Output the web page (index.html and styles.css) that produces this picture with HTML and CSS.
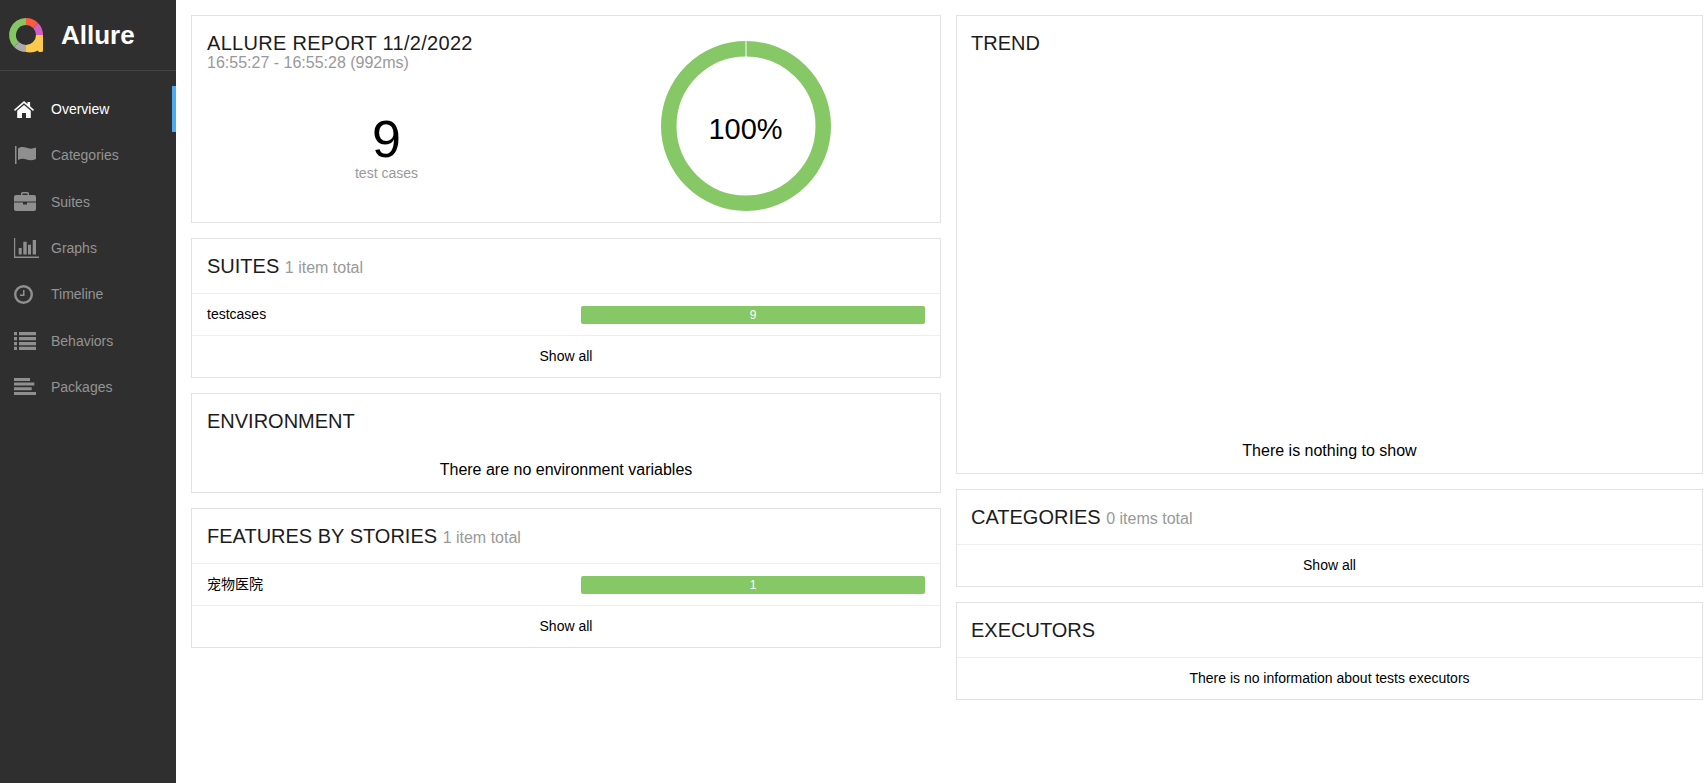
FILE: index.html
```html
<!DOCTYPE html>
<html lang="en">
<head>
<meta charset="utf-8">
<title>Allure Report</title>
<link rel="stylesheet" href="styles.css">
</head>
<body>
<aside class="side">
  <div class="brand">
    <svg class="logo" viewBox="0 0 36 36" width="36" height="36">
      <g fill="none" stroke-width="7">
        <path d="M8.45 27.55A13.5 13.5 0 0 1 18 4.500" stroke="#84c663"/>
        <path d="M18 4.500A13.500 13.500 0 0 1 27.550 8.450" stroke="#fd5a3e"/>
        <path d="M27.550 8.450A13.500 13.500 0 0 1 31.500 18" stroke="#d35ebe"/>
        <path d="M18 31.500A13.500 13.500 0 0 1 8.450 27.550" stroke="#aaa"/>
      </g>
      <path class="tail" d="M35 18v15.500q0 1.500 -1.500 1.500h-2q-1.200 0-1.500-1.600A17 17 0 0 1 18 35v-7a10 10 0 0 0 10-10z"/>
    </svg>
    <span class="brand-name">Allure</span>
  </div>
  <nav class="menu">
    <a class="item on"><span class="ic-box"><svg class="ic" width="20" height="17" viewBox="0 0 20 17"><path d="M10 0 13.500 3V1h2.600v4.300L20 8.800 19 10 10 2.300 1 10 0 8.800zM10 4l6.800 5.800V17H12v-5H8v5H3.200V9.800z"/></svg></span><span>Overview</span></a>
    <a class="item"><span class="ic-box"><svg class="ic ic-flag" width="21" height="18" viewBox="0 0 21 18"><path d="M0 0h1.500v18H0zM3 2.500C6 .5 9 .8 11.500 1.800s6 1.300 9.500-.3v11.500c-3.500 1.600-6.500 1.500-9.500.5s-5.500-1-8.500.5z"/></svg></span><span>Categories</span></a>
    <a class="item"><span class="ic-box"><svg class="ic" width="22" height="19" viewBox="0 0 22 19"><path fill-rule="evenodd" d="M7 3V1.500A1.500 1.500 0 0 1 8.500 0h5A1.500 1.500 0 0 1 15 1.500V3h5a2 2 0 0 1 2 2v4.500H0V5a2 2 0 0 1 2-2zm1.500 0h5V1.500h-5zM0 10.500h9v2h4v-2h9V17a2 2 0 0 1-2 2H2a2 2 0 0 1-2-2z"/></svg></span><span>Suites</span></a>
    <a class="item"><span class="ic-box"><svg class="ic" width="25" height="20" viewBox="0 0 25 20"><path d="M0 0h1.200v18.500H25V20H0zM4.700 10h3v6.500h-3zM9.300 3.700h3.400v12.800H9.300zM14 6.700h3v9.800h-3zM18.700 2H22v14.500h-3.300z"/></svg></span><span>Graphs</span></a>
    <a class="item"><span class="ic-box"><svg class="ic" width="19" height="19" viewBox="0 0 19 19"><path fill-rule="evenodd" d="M9.500 0a9.500 9.500 0 1 1 0 19 9.500 9.500 0 0 1 0-19zm0 2.400a7.100 7.100 0 1 0 0 14.200 7.100 7.100 0 0 0 0-14.200zM10.500 5v6H6V9.500h3V5z"/></svg></span><span>Timeline</span></a>
    <a class="item"><span class="ic-box"><svg class="ic" width="22" height="18" viewBox="0 0 22 18"><path d="M0 0h3v3.200H0zM5 0h17v3.200H5zM0 5h3v3.200H0zM5 5h17v3.200H5zM0 10h3v3.200H0zM5 10h17v3.200H5zM0 14.800h3V18H0zM5 14.800h17V18H5z"/></svg></span><span>Behaviors</span></a>
    <a class="item"><span class="ic-box"><svg class="ic" width="22" height="17" viewBox="0 0 22 17"><path d="M0 0h16v3H0zM0 4.600h20.300v3H0zM0 9.200h17.700v3H0zM0 14h22v3H0z"/></svg></span><span>Packages</span></a>
  </nav>
</aside>
<main class="main">
  <div class="col">
    <section class="card summary">
      <div class="sum-left">
        <h2 class="title title-wide">ALLURE REPORT 11/2/2022</h2>
        <div class="time">16:55:27 - 16:55:28 (992ms)</div>
        <div class="count">
          <div class="num">9</div>
          <div class="cap">test cases</div>
        </div>
      </div>
      <div class="sum-right">
        <div class="donut">
          <svg viewBox="0 0 170 170" width="170" height="170">
            <circle cx="85" cy="85" r="77.250" fill="none" stroke="#86c766" stroke-width="15.500"/>
            <rect x="84.500" y="0" width="1" height="16" fill="#fff"/>
          </svg>
          <span class="pct">100%</span>
        </div>
      </div>
    </section>
    <section class="card">
      <div class="head"><h2 class="title">SUITES <small>1 item total</small></h2></div>
      <div class="row"><span class="row-name">testcases</span><div class="bar">9</div></div>
      <div class="row-foot">Show all</div>
    </section>
    <section class="card">
      <div class="head head-plain"><h2 class="title">ENVIRONMENT</h2></div>
      <div class="empty env">There are no environment variables</div>
    </section>
    <section class="card">
      <div class="head"><h2 class="title">FEATURES BY STORIES <small>1 item total</small></h2></div>
      <div class="row"><span class="row-name">宠物医院</span><div class="bar">1</div></div>
      <div class="row-foot">Show all</div>
    </section>
  </div>
  <div class="col col-right">
    <section class="card trend">
      <div class="head head-plain"><h2 class="title">TREND</h2></div>
      <div class="trend-msg">There is nothing to show</div>
    </section>
    <section class="card">
      <div class="head"><h2 class="title">CATEGORIES <small>0 items total</small></h2></div>
      <div class="row-foot">Show all</div>
    </section>
    <section class="card">
      <div class="head"><h2 class="title">EXECUTORS</h2></div>
      <div class="row-foot">There is no information about tests executors</div>
    </section>
  </div>
</main>
</body>
</html>
```
FILE: styles.css
```css
* { box-sizing: border-box; }
html, body { height: 100%; }
body {
  margin: 0;
  display: flex;
  height: 783px;
  overflow: hidden;
  background: #fff;
  color: #000;
  font-family: "Liberation Sans", "Noto Sans CJK SC", sans-serif;
  font-size: 14px;
}
.side { width: 176px; flex: none; background: #2f2f2f; color: #999; }
.brand {
  height: 71px;
  border-bottom: 1px solid #444;
  display: flex;
  align-items: center;
  padding-left: 8px;
  gap: 17px;
}
.logo { flex: none; }
.tail { fill: #ffc94d; }
.brand-name { color: #fff; font-size: 26px; font-weight: 700; }
.menu { padding-top: 15px; display: flex; flex-direction: column; }
.item {
  height: 46.3px;
  display: flex;
  align-items: center;
  font-size: 14px;
  padding-left: 14px;
  color: #949494;
}
.ic-box { width: 37px; flex: none; display: flex; align-items: center; }
.item.on { color: #fff; border-right: 4px solid #4eaaf0; }
.ic { fill: #8f8f8f; flex: none; }
.ic-flag { margin-left: 1px; }
.on .ic { fill: #fff; }
.main {
  flex: 1;
  padding: 15px 4px 0 15px;
  display: grid;
  grid-template-columns: 750px 1fr;
  column-gap: 15px;
  align-items: start;
}
.col { display: flex; flex-direction: column; gap: 15px; }
.col-right .head { padding-left: 14px; }
.card { border: 1px solid #e2e2e2; background: #fff; }
.title { margin: 0; font-size: 20px; font-weight: 400; line-height: 24px; color: #1c1c1c; }
.title-wide { letter-spacing: .29px; white-space: nowrap; }
.title small { font-size: 16px; color: #999; }
.summary { height: 208px; display: flex; }
.sum-left { width: 359px; padding: 15px; }
.time { font-size: 16px; line-height: 16px; color: #999; }
.count { margin-top: 42px; padding-left: 30px; text-align: center; }
.num { font-size: 52px; line-height: 53px; }
.cap { color: #999; font-size: 14px; line-height: 14px; }
.sum-right { flex: 1; display: flex; justify-content: center; padding-top: 25px; }
.donut { position: relative; width: 170px; height: 170px; }
.pct { position: absolute; inset: 6px 0 0; display: flex; align-items: center; justify-content: center; font-size: 29px; }
.head { height: 55px; padding: 15px 15px 0; border-bottom: 1px solid #eee; }
.head-plain { border-bottom: 0; }
.row { height: 42px; padding: 0 15px; display: flex; align-items: center; justify-content: space-between; border-bottom: 1px solid #eee; }
.row-name { line-height: 18px; padding-bottom: 2px; }
.bar { width: 344px; height: 18px; background: #86c766; color: #fff; border-radius: 2px; font-size: 12px; line-height: 18px; text-align: center; }
.row-foot { height: 41px; padding-bottom: 1px; display: flex; align-items: center; justify-content: center; }
.empty { text-align: center; font-size: 16px; }
.env { height: 43px; padding-top: 12px; }
.trend { height: 459px; display: flex; flex-direction: column; }
.trend-msg { margin-top: auto; height: 45px; text-align: center; font-size: 16px; line-height: 20px; padding-top: 13px; }
```
